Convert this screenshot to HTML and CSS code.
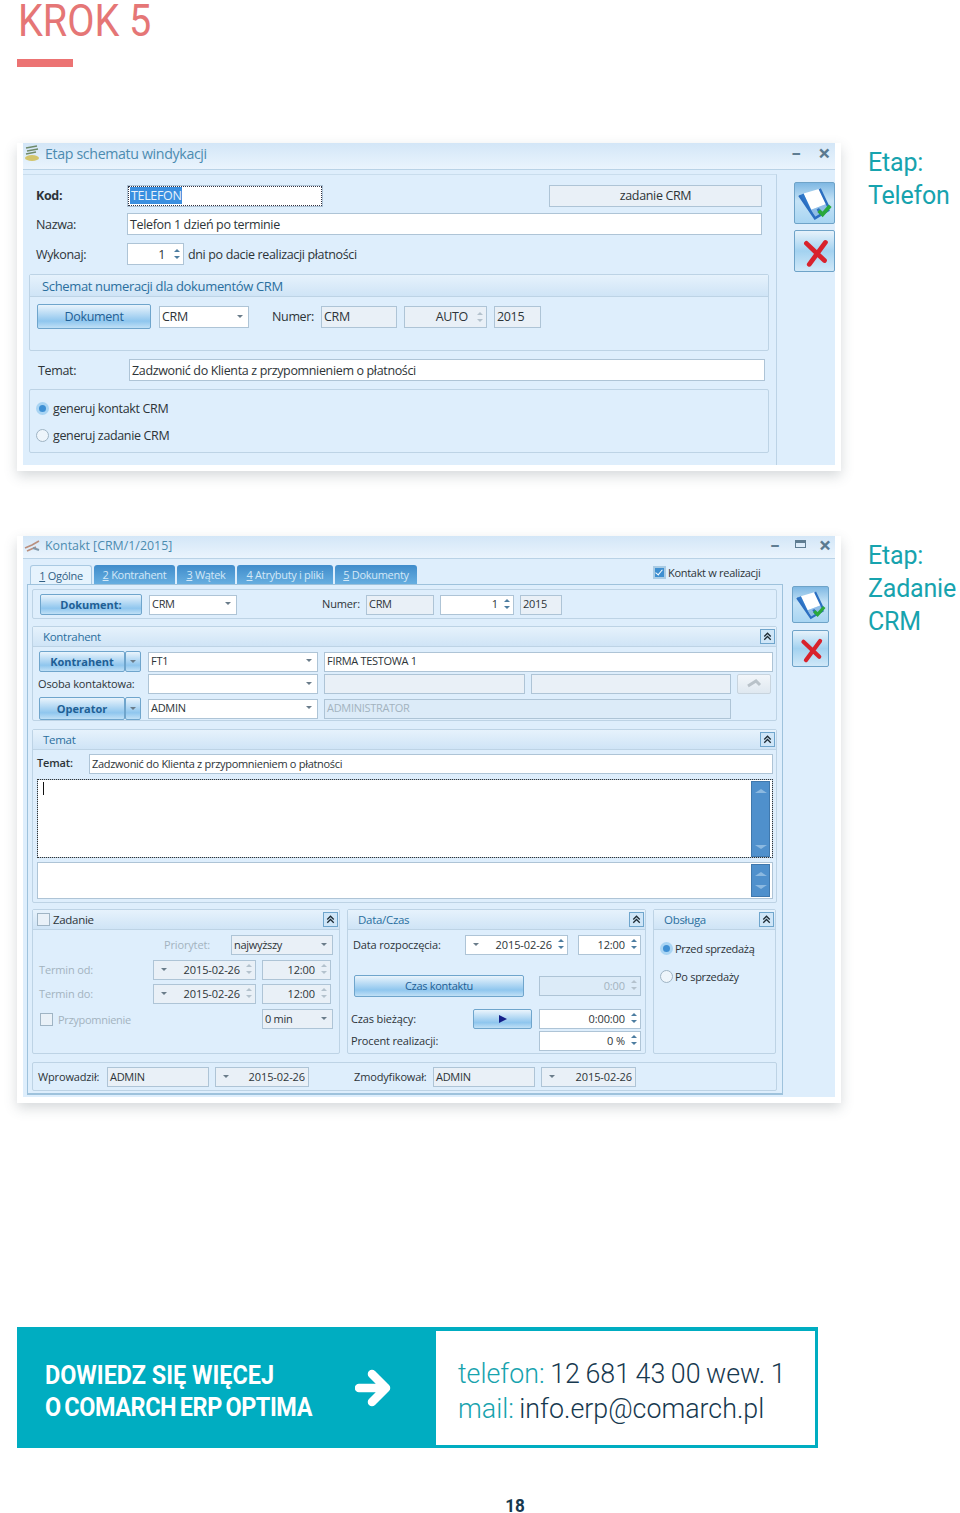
FILE: index.html
```html
<!DOCTYPE html>
<html lang="pl">
<head>
    <meta charset="UTF-8">
    <meta name="viewport" content="width=device-width, initial-scale=1.0">
    <link rel="stylesheet" href="styles.css">
    <title>Krok 5</title>
</head>
<body>

<svg class="defs" width="0" height="0">
    <symbol id="ico-save" viewBox="0 0 41 42">
        <polygon points="9,11 26,6 33,22 17,28" fill="#fff"/>
        <polygon points="17,28 33,22 36,28 21,37" fill="#8fbde6"/>
        <polygon points="4.500,13 9,11 17,28 21,37" fill="#2f78c9"/>
        <path d="M24 27 L28 34" stroke="#2c6fc1" stroke-width="3"/>
        <path d="M4.500 13 L21 37 L36 28 M26 6 L36 27" fill="none" stroke="#2c6fc1" stroke-width="2.600"/>
        <path d="M25 29 L29 33 L37 24" fill="none" stroke="#2aa83c" stroke-width="4"/>
    </symbol>
    <symbol id="ico-cancel" viewBox="0 0 41 42">
        <path d="M12 13 L31 31 M32 12 L15 35" fill="none" stroke="#d8222c" stroke-width="5" stroke-linecap="round"/>
    </symbol>
    <symbol id="ico-fold" viewBox="0 0 16 16">
        <path d="M4 8 L8 4 L12 8 M4 12 L8 8 L12 12" fill="none" stroke="#1d2a33" stroke-width="1.600"/>
    </symbol>
</svg>

<main class="page">
    <h1 class="step-title">KROK 5</h1>
    <div class="step-bar"></div>

    <!-- okno etapu -->
    <section class="shot-row shot-row-first">
        <div class="shot">
            <div class="win win-a">
                <div class="titlebar">
                    <svg class="win-ico" width="17" height="17" viewBox="0 0 17 17">
                        <path d="M2 3 L13 1 M3 6 L14 4 M2 9 L12 7" stroke="#6f8a6a" stroke-width="1.400"/>
                        <ellipse cx="8" cy="13" rx="7" ry="3" fill="#d3c56c"/>
                    </svg>
                    <span class="title-text">Etap schematu windykacji</span>
                    <span class="win-btn">–</span>
                    <span class="win-btn win-close">×</span>
                </div>
                <div class="win-body">
                    <div class="win-main">
                        <div class="grid a-kod">
                            <label class="lbl strong">Kod:</label>
                            <div class="fld focus"><span class="selected">TELEFON</span></div>
                            <span></span>
                            <div class="fld ro center">zadanie CRM</div>
                        </div>
                        <div class="grid a-nazwa">
                            <label class="lbl">Nazwa:</label>
                            <div class="fld">Telefon 1 dzień po terminie</div>
                        </div>
                        <div class="grid a-wykonaj">
                            <label class="lbl">Wykonaj:</label>
                            <div class="fld num">1<i class="spin"></i></div>
                            <span class="lbl">dni po dacie realizacji płatności</span>
                        </div>
                        <div class="group a-schemat">
                            <div class="group-head">Schemat numeracji dla dokumentów CRM</div>
                            <div class="grid a-numer">
                                <button class="btn plain">Dokument</button>
                                <div class="fld combo">CRM<i class="drop"></i></div>
                                <label class="lbl">Numer:</label>
                                <div class="fld ro">CRM</div>
                                <div class="fld ro num">AUTO<i class="spin"></i></div>
                                <div class="fld ro">2015</div>
                            </div>
                        </div>
                        <div class="grid a-temat">
                            <label class="lbl">Temat:</label>
                            <div class="fld">Zadzwonić do Klienta z przypomnieniem o płatności</div>
                        </div>
                        <div class="group a-radio">
                            <div class="choice"><i class="radio on"></i>generuj kontakt CRM</div>
                            <div class="choice"><i class="radio"></i>generuj zadanie CRM</div>
                        </div>
                    </div>
                    <div class="win-side">
                        <button class="act"><svg><use href="#ico-save"/></svg></button>
                        <button class="act act-x"><svg><use href="#ico-cancel"/></svg></button>
                    </div>
                </div>
            </div>
        </div>
        <p class="caption">Etap:<br>Telefon</p>
    </section>

    <!-- okno kontaktu -->
    <section class="shot-row shot-row-second">
        <div class="shot">
            <div class="win win-b">
                <div class="titlebar">
                    <svg class="win-ico" width="17" height="15" viewBox="0 0 17 15">
                        <path d="M1 10 L8 7 L15 3 M3 13 L12 9" stroke="#b98f7e" stroke-width="1.600" fill="none"/>
                        <path d="M9 10 L15 12" stroke="#7f97aa" stroke-width="2"/>
                    </svg>
                    <span class="title-text">Kontakt [CRM/1/2015]</span>
                    <span class="win-btn">–</span>
                    <span class="win-btn win-max"></span>
                    <span class="win-btn win-close">×</span>
                </div>
                <div class="tabs-line">
                    <span class="tab active"><u>1</u> Ogólne</span>
                    <span class="tab t-kon"><u>2</u> Kontrahent</span>
                    <span class="tab t-wat"><u>3</u> Wątek</span>
                    <span class="tab t-atr"><u>4</u> Atrybuty i pliki</span>
                    <span class="tab t-dok"><u>5</u> Dokumenty</span>
                    <span class="choice realizacja"><i class="check on"></i>Kontakt w realizacji</span>
                </div>
                <div class="win-body">
                    <div class="tab-panel">
                        <div class="group b-doc">
                            <div class="grid b-numer">
                                <button class="btn">Dokument:</button>
                                <div class="fld combo">CRM<i class="drop"></i></div>
                                <label class="lbl">Numer:</label>
                                <div class="fld ro">CRM</div>
                                <div class="fld num">1<i class="spin"></i></div>
                                <div class="fld ro">2015</div>
                            </div>
                        </div>

                        <div class="group b-kontrahent">
                            <div class="group-head">Kontrahent<i class="fold"><svg><use href="#ico-fold"/></svg></i></div>
                            <div class="grid b-k1">
                                <div class="split"><button class="btn">Kontrahent</button><button class="btn mini"><i class="drop"></i></button></div>
                                <div class="fld combo">FT1<i class="drop"></i></div>
                                <div class="fld">FIRMA TESTOWA 1</div>
                            </div>
                            <div class="grid b-k2">
                                <label class="lbl">Osoba kontaktowa:</label>
                                <div class="fld combo"><i class="drop"></i></div>
                                <div class="fld ro"></div>
                                <div class="fld ro"></div>
                                <button class="btn pale">
                                    <svg width="18" height="12" viewBox="0 0 18 12"><path d="M3 10 L11 5 L15 9" fill="none" stroke="#b9c2c9" stroke-width="3"/></svg>
                                </button>
                            </div>
                            <div class="grid b-k3">
                                <div class="split"><button class="btn">Operator</button><button class="btn mini"><i class="drop"></i></button></div>
                                <div class="fld combo">ADMIN<i class="drop"></i></div>
                                <div class="fld off">ADMINISTRATOR</div>
                            </div>
                        </div>

                        <div class="group b-tem">
                            <div class="group-head">Temat<i class="fold"><svg><use href="#ico-fold"/></svg></i></div>
                            <div class="grid b-t1">
                                <label class="lbl">Temat:</label>
                                <div class="fld">Zadzwonić do Klienta z przypomnieniem o płatności</div>
                            </div>
                            <div class="memo memo-big"><i class="caret"></i><i class="scroll"></i></div>
                            <div class="memo memo-small"><i class="scroll"></i></div>
                        </div>

                        <div class="bottom-row">
                            <div class="group zadanie">
                                <div class="group-head dark"><i class="check"></i>Zadanie<i class="fold"><svg><use href="#ico-fold"/></svg></i></div>
                                <div class="grid z-prio">
                                    <label class="lbl dim">Priorytet:</label>
                                    <div class="fld combo ro">najwyższy<i class="drop"></i></div>
                                </div>
                                <div class="grid z-term z-od">
                                    <label class="lbl dim">Termin od:</label>
                                    <div class="fld ro num date"><i class="drop"></i>2015-02-26<i class="spin"></i></div>
                                    <div class="fld ro num">12:00<i class="spin"></i></div>
                                </div>
                                <div class="grid z-term z-do">
                                    <label class="lbl dim">Termin do:</label>
                                    <div class="fld ro num date"><i class="drop"></i>2015-02-26<i class="spin"></i></div>
                                    <div class="fld ro num">12:00<i class="spin"></i></div>
                                </div>
                                <div class="grid z-przyp">
                                    <span class="choice dim"><i class="check"></i>Przypomnienie</span>
                                    <div class="fld combo ro">0 min<i class="drop"></i></div>
                                </div>
                            </div>

                            <div class="group datacz">
                                <div class="group-head">Data/Czas<i class="fold"><svg><use href="#ico-fold"/></svg></i></div>
                                <div class="grid d-start">
                                    <label class="lbl">Data rozpoczęcia:</label>
                                    <div class="fld num date"><i class="drop"></i>2015-02-26<i class="spin"></i></div>
                                    <div class="fld num">12:00<i class="spin"></i></div>
                                </div>
                                <div class="grid d-kontakt">
                                    <button class="btn plain">Czas kontaktu</button>
                                    <div class="fld off num">0:00<i class="spin"></i></div>
                                </div>
                                <div class="grid d-biez">
                                    <label class="lbl">Czas bieżący:</label>
                                    <button class="btn play"><i class="play-ico"></i></button>
                                    <div class="fld num">0:00:00<i class="spin"></i></div>
                                </div>
                                <div class="grid d-proc">
                                    <label class="lbl">Procent realizacji:</label>
                                    <div class="fld num">0 %<i class="spin"></i></div>
                                </div>
                            </div>

                            <div class="group obsluga">
                                <div class="group-head">Obsługa<i class="fold"><svg><use href="#ico-fold"/></svg></i></div>
                                <div class="choice"><i class="radio on"></i>Przed sprzedażą</div>
                                <div class="choice"><i class="radio"></i>Po sprzedaży</div>
                            </div>
                        </div>

                        <div class="group stopka">
                            <div class="grid s-row">
                                <label class="lbl">Wprowadził:</label>
                                <div class="fld ro">ADMIN</div>
                                <div class="fld ro num date"><i class="drop"></i>2015-02-26</div>
                                <label class="lbl">Zmodyfikował:</label>
                                <div class="fld ro">ADMIN</div>
                                <div class="fld ro num date"><i class="drop"></i>2015-02-26</div>
                            </div>
                        </div>
                    </div>
                    <div class="win-side">
                        <button class="act"><svg><use href="#ico-save"/></svg></button>
                        <button class="act act-x"><svg><use href="#ico-cancel"/></svg></button>
                    </div>
                </div>
            </div>
        </div>
        <p class="caption">Etap:<br>Zadanie<br>CRM</p>
    </section>

    <section class="banner">
        <h2 class="banner-title">DOWIEDZ SIĘ WIĘCEJ<br><span class="tight">O COMARCH ERP OPTIMA</span></h2>
        <svg class="banner-arrow" width="36" height="38" viewBox="0 0 36 38">
            <path d="M4 19 H28 M17 5 L31 19 L17 33" fill="none" stroke="#fff" stroke-width="8.500" stroke-linecap="round" stroke-linejoin="round"/>
        </svg>
        <div class="banner-box">
            <p><span class="key">telefon:</span> 12 681 43 00 wew. 1</p>
            <p><span class="key">mail:</span> info.erp@comarch.pl</p>
        </div>
    </section>

    <div class="page-no">18</div>
</main>

</body>
</html>
```

FILE: styles.css
```css
body {
    margin: 0;
    background-color: #fff;
    font-family: Roboto, "Open Sans", sans-serif;
}

.defs {
    display: block;
    height: 0;
}

.page {
    width: 960px;
    height: 1513px;
    padding-left: 17px;
    box-sizing: border-box;
}

.step-title {
    margin: 0;
    height: 59px;
    padding-left: 1px;
    font-size: 44px;
    line-height: 42px;
    font-weight: 400;
    color: #e57676;
    transform: scaleX(0.9);
    transform-origin: left;
}

.step-bar {
    width: 56px;
    height: 8px;
    background-color: #ec7373;
}

/* screenshot with caption */
.shot-row {
    display: flex;
    align-items: flex-start;
}

.shot-row-first {
    margin-top: 76px;
}

.shot-row-second {
    margin-top: 65px;
}

.shot {
    flex-shrink: 0;
    width: 824px;
    padding: 0 6px 6px;
    box-sizing: border-box;
    background-color: #fff;
    box-shadow: 0 5px 12px rgba(70, 80, 90, 0.22);
}

.caption {
    margin: 3px 0 0 27px;
    font-size: 25px;
    line-height: 33px;
    font-weight: 400;
    letter-spacing: -0.2px;
    white-space: nowrap;
    color: #17a3ae;
}

/* window chrome */
.win {
    display: flex;
    flex-direction: column;
    background-color: #deeefc;
    font-family: "Open Sans", sans-serif;
    color: #2d3438;
}

.win-a {
    height: 322px;
    font-size: 12.5px;
    letter-spacing: -0.35px;
}

.win-b {
    height: 561px;
    font-size: 11px;
    letter-spacing: -0.3px;
}

.titlebar {
    display: flex;
    align-items: center;
    flex-shrink: 0;
    box-sizing: border-box;
    border-bottom: 1px solid #b9d2e6;
    background: linear-gradient(#d3e6f7, #eaf4fd);
    color: #4c8bb0;
}

.win-a .titlebar {
    height: 27px;
    padding-bottom: 6px;
    font-size: 14.2px;
}

.win-b .titlebar {
    height: 23px;
    padding-bottom: 3px;
    font-size: 12.4px;
    letter-spacing: 0;
}

.win-ico {
    margin: 0 4px 0 1px;
}

.title-text {
    flex: 1;
}

.win-btn {
    display: flex;
    align-items: center;
    justify-content: center;
    width: 20px;
    height: 18px;
    margin: 0 0 4px 5px;
    font-size: 18px;
    line-height: 18px;
    font-weight: 700;
    color: #5f7d92;
}

.win-a .win-btn {
    width: 22px;
    margin: 0 0 3px 6px;
}

.win-close {
    color: #5b7a90;
    font-size: 22px;
}

.win-max::before {
    content: "";
    width: 11px;
    height: 8px;
    box-sizing: border-box;
    border: 1px solid #5f7d92;
    border-top-width: 3px;
}

.win-body {
    display: flex;
    flex: 1;
    min-height: 0;
}

.win-main {
    width: 754px;
    margin-top: 4px;
    padding-top: 10px;
    box-sizing: border-box;
    border-top: 1px solid #c9dded;
    border-right: 1px solid #bcd3e6;
}

.win-side {
    display: flex;
    flex-direction: column;
    flex: 1;
    gap: 6px;
    padding: 12px 0 0 17px;
}

.win-b .win-side {
    gap: 7px;
    padding: 2px 0 0 9px;
}

.act {
    width: 41px;
    height: 42px;
    padding: 0;
    border: 1px solid #6ea3c8;
    border-radius: 2px;
    background: linear-gradient(#7fb8e3, #c5e3f6 45%, #a8d5f2);
}

.act-x {
    background: linear-gradient(#e6f2fb, #a3d2f0 50%, #d0e8f8);
}

.win-b .act {
    width: 37px;
    height: 37px;
}

.act svg {
    display: block;
    width: 100%;
    height: 100%;
}

/* form parts */
.grid {
    display: grid;
    align-items: center;
}

.lbl {
    white-space: nowrap;
}

.win-b .lbl {
    padding-bottom: 2px;
    letter-spacing: -0.15px;
}

.strong {
    font-weight: 700;
}

.dim {
    color: #a3b3bf;
}

.fld {
    display: flex;
    align-items: center;
    height: 22px;
    padding: 0 2px;
    box-sizing: border-box;
    border: 1px solid #aec4d6;
    background-color: #fff;
    color: #2d3438;
    white-space: nowrap;
    overflow: hidden;
}

.win-b .fld {
    height: 20px;
    padding-bottom: 2px;
}

.fld.ro {
    background-color: #e9f0f7;
}

.fld.off {
    background-color: #dcebf8;
    color: #a3b3bf;
}

.fld.center {
    justify-content: center;
}

.fld.num {
    justify-content: flex-end;
    padding-right: 3px;
}

.win-b .fld.num {
    letter-spacing: -0.1px;
}

.fld.combo {
    justify-content: space-between;
    padding-right: 5px;
}

.fld.combo .drop {
    margin-left: auto;
}

.fld.date {
    justify-content: flex-end;
    gap: 0;
}

.fld.date .drop {
    margin-right: auto;
    margin-left: 5px;
}

.focus {
    outline: 1px dotted #334;
    outline-offset: -2px;
}

.selected {
    padding: 0 1px;
    background-color: #3a8fe0;
    color: #e8f2fb;
}

.drop {
    width: 0;
    height: 0;
    border-left: 3px solid transparent;
    border-right: 3px solid transparent;
    border-top: 3px solid #6a7c8a;
}

.spin {
    display: flex;
    flex-direction: column;
    justify-content: center;
    gap: 4px;
    margin-left: 6px;
}

.win-a .spin {
    margin-left: 9px;
}

.spin::before,
.spin::after {
    content: "";
    width: 0;
    height: 0;
    border-left: 3px solid transparent;
    border-right: 3px solid transparent;
}

.spin::before {
    border-bottom: 3px solid #4d7da0;
}

.spin::after {
    border-top: 3px solid #4d7da0;
}

.ro .spin::before,
.off .spin::before {
    border-bottom-color: #b4c2cd;
}

.ro .spin::after,
.off .spin::after {
    border-top-color: #b4c2cd;
}

.btn {
    height: 100%;
    padding: 0 0 1px;
    border: 1px solid #6fa5cc;
    border-radius: 2px;
    background: linear-gradient(#eaf4fc, #8fc6ee 70%, #c0e0f6);
    color: #1e5f95;
    font-family: inherit;
    font-size: inherit;
    letter-spacing: 0;
    font-weight: 700;
}

.btn.plain {
    font-weight: 400;
    letter-spacing: -0.3px;
}

.btn.pale {
    height: 20px;
    border-color: #c8d4de;
    background: linear-gradient(#f2f6fa, #dfe8f0);
}

.split {
    display: grid;
    grid-template-columns: 86px 16px;
    width: 102px;
    height: 100%;
}

.btn.mini {
    display: flex;
    align-items: center;
    justify-content: center;
}

.choice {
    display: flex;
    align-items: center;
    gap: 4px;
    white-space: nowrap;
}

.win-b .choice {
    gap: 2px;
}

.radio {
    width: 13px;
    height: 13px;
    box-sizing: border-box;
    border: 1px solid #9fb4c4;
    border-radius: 50%;
    background-color: #eef5fb;
}

.radio.on {
    border: 3px solid #a9d4f3;
    background-color: #3f90d4;
}

.check {
    position: relative;
    width: 13px;
    height: 13px;
    box-sizing: border-box;
    border: 1px solid #9fb4c4;
    background-color: #e9f1f8;
}

.check.on {
    border: 2px solid #a9cbe4;
    background-color: #3f8fd0;
}

/* the tick sits over the box */
.check.on::after {
    content: "";
    position: absolute;
    left: 2px;
    top: 0;
    width: 3px;
    height: 6px;
    border-right: 1.500px solid #fff;
    border-bottom: 1.500px solid #fff;
    transform: rotate(40deg);
}

.group {
    box-sizing: border-box;
    border: 1px solid #bdd3e5;
    border-radius: 2px;
    background-color: #deeefc;
}

.group-head {
    display: flex;
    align-items: center;
    justify-content: space-between;
    box-sizing: border-box;
    border-bottom: 1px solid #bdd3e5;
    background: linear-gradient(#e6f2fc, #cfe4f6);
    color: #2a6f9e;
}

.group-head.dark {
    justify-content: flex-start;
    gap: 3px;
    color: #2d3438;
}

.group-head.dark .fold {
    margin-left: auto;
}

.fold {
    display: flex;
    width: 15px;
    height: 15px;
    box-sizing: border-box;
    margin: 0 1px 0 0;
    border: 1px solid #6fa5cc;
    background-color: #cfe6f8;
}

.fold svg {
    width: 100%;
    height: 100%;
}

/* first window */
.a-kod {
    grid-template-columns: 91px 196px 226px 213px;
    margin-left: 13px;
}

.a-kod > .lbl,
.a-kod > .fld {
    padding-bottom: 2px;
}

.a-nazwa {
    grid-template-columns: 91px 635px;
    margin: 6px 0 0 13px;
}

.a-wykonaj {
    grid-template-columns: 91px 57px auto;
    margin: 8px 0 0 13px;
}

.a-wykonaj .lbl:last-child {
    padding-left: 4px;
}

.a-schemat {
    width: 740px;
    height: 77px;
    margin: 9px 0 0 6px;
}

.a-schemat .group-head {
    height: 22px;
    padding-left: 12px;
    font-size: 13px;
}

.a-numer {
    grid-template-columns: 114px 98px 72px 76px 90px 54px;
    height: 25px;
    margin: 7px 0 0 7px;
}

.a-numer .fld:nth-child(2) {
    margin-left: 8px;
}

.a-numer .lbl {
    padding-left: 23px;
}

.a-numer .fld:nth-child(5),
.a-numer .fld:nth-child(6) {
    margin-left: 7px;
}

.a-temat {
    grid-template-columns: 91px 636px;
    margin: 8px 0 0 15px;
}

.a-radio {
    display: flex;
    flex-direction: column;
    gap: 10px;
    width: 740px;
    height: 64px;
    margin: 8px 0 0 6px;
    padding: 10px 0 0 6px;
}

.a-radio .choice {
    height: 17px;
}

/* second window */
.tabs-line {
    display: flex;
    align-items: flex-end;
    flex-shrink: 0;
    gap: 2px;
    height: 25px;
    padding-left: 7px;
}

.tab {
    display: flex;
    align-items: center;
    justify-content: center;
    box-sizing: border-box;
    height: 19px;
    border-radius: 3px 3px 0 0;
    background: linear-gradient(#3f8ccb, #67aee0);
    color: #d3e8f7;
    font-size: 11px;
    white-space: pre;
}

.tab.active {
    width: 62px;
    border: 1px solid #a9c9e2;
    border-bottom: 0;
    background-color: #e6f3fd;
    background-image: none;
    color: #2f5f85;
}

.t-kon { width: 81px; }
.t-wat { width: 58px; }
.t-atr { width: 96px; }
.t-dok { width: 82px; }

.realizacja {
    align-self: center;
    margin: 2px 0 0 234px;
}

.tab-panel {
    display: flex;
    flex-direction: column;
    width: 756px;
    height: 511px;
    margin-left: 4px;
    padding: 4px 5px 0 4px;
    box-sizing: border-box;
    border: 1px solid #9ec2dc;
    border-bottom-width: 2px;
    background-color: #deeefc;
}

.b-doc {
    flex-shrink: 0;
    height: 30px;
    padding: 4px 0 0 7px;
}

.b-numer {
    grid-template-columns: 102px 95px 129px 68px 80px 48px;
    height: 21px;
}

.b-numer .fld:nth-child(2) {
    margin-left: 7px;
}

.b-numer .lbl {
    padding-left: 85px;
}

.b-numer .fld:nth-child(5),
.b-numer .fld:nth-child(6) {
    margin-left: 6px;
}

.b-kontrahent {
    flex-shrink: 0;
    height: 95px;
    margin-top: 7px;
}

.b-kontrahent .group-head,
.b-tem .group-head,
.bottom-row .group-head {
    height: 20px;
    padding-left: 10px;
    font-size: 11.5px;
}

.b-k1,
.b-k3 {
    column-gap: 6px;
    margin: 4px 0 0 6px;
}

.b-k1 {
    grid-template-columns: 103px 170px 449px;
    height: 21px;
}

.b-k3 {
    grid-template-columns: 103px 170px 407px;
    height: 23px;
    margin-top: 3px;
}

.b-k2 {
    grid-template-columns: 104px 170px 201px 200px 34px;
    column-gap: 6px;
    margin: 2px 0 0 5px;
}

.b-tem {
    flex-shrink: 0;
    height: 174px;
    margin-top: 8px;
}

.b-t1 {
    grid-template-columns: 52px 684px;
    margin: 4px 0 0 4px;
}

.b-t1 .lbl {
    padding-bottom: 4px;
    font-weight: 600;
}

.memo {
    display: flex;
    justify-content: space-between;
    box-sizing: border-box;
    width: 736px;
    margin-left: 4px;
    padding-right: 2px;
    background-color: #fff;
    border: 1px solid #aec4d6;
}

.memo-big {
    height: 79px;
    margin-top: 5px;
    padding: 0 2px 0 5px;
    outline: 1px dotted #333;
    outline-offset: -1px;
}

.memo-small {
    height: 37px;
    margin-top: 4px;
    padding-top: 1px;
    justify-content: flex-end;
}

.caret {
    width: 1px;
    height: 13px;
    margin-top: 2px;
    background-color: #111;
}

/* scrollbar track with its two arrows */
.scroll {
    display: flex;
    flex-direction: column;
    justify-content: space-between;
    align-items: center;
    width: 19px;
    height: calc(100% - 1px);
    padding: 7px 0;
    margin-top: 1px;
    background-color: #4f90cc;
    border: 1px solid #3f78ad;
    box-sizing: border-box;
}

.memo-small .scroll {
    height: 33px;
    margin: 0;
}

.scroll::before,
.scroll::after {
    content: "";
    width: 0;
    height: 0;
    border-left: 6px solid transparent;
    border-right: 6px solid transparent;
}

.scroll::before {
    border-bottom: 4px solid #8cb9e0;
}

.scroll::after {
    border-top: 4px solid #8cb9e0;
}

.bottom-row {
    display: grid;
    flex-shrink: 0;
    grid-template-columns: 308px 299px 123px;
    column-gap: 7px;
    height: 145px;
    margin-top: 6px;
}

.zadanie > .group-head {
    padding-left: 4px;
}

.z-prio {
    grid-template-columns: 67px 102px;
    margin: 5px 0 0 131px;
}

.z-term {
    grid-template-columns: 114px 103px 75px;
    margin-left: 6px;
}

.z-term .fld:last-child {
    margin-left: 6px;
}

.z-od {
    margin-top: 5px;
}

.z-do {
    margin-top: 4px;
}

.z-przyp {
    grid-template-columns: 222px 71px;
    margin: 5px 0 0 7px;
}

.z-przyp .choice {
    gap: 5px;
}

.d-start {
    grid-template-columns: 112px 103px 73px;
    margin: 5px 0 0 5px;
}

.d-start .fld:last-child {
    margin-left: 10px;
}

.d-kontakt {
    grid-template-columns: 185px 102px;
    height: 22px;
    margin: 20px 0 0 6px;
}

.d-kontakt .btn {
    width: 170px;
}

.d-biez {
    grid-template-columns: 122px 66px 102px;
    height: 20px;
    margin: 12px 0 0 3px;
}

.d-biez .btn {
    width: 59px;
}

.play-ico {
    display: inline-block;
    width: 0;
    height: 0;
    border-top: 4px solid transparent;
    border-bottom: 4px solid transparent;
    border-left: 8px solid #14208a;
}

.d-proc {
    grid-template-columns: 188px 102px;
    margin: 2px 0 0 3px;
}

.obsluga .choice {
    height: 16px;
    margin-left: 6px;
}

.obsluga .group-head + .choice {
    margin-top: 10px;
}

.obsluga .choice + .choice {
    margin-top: 12px;
}

.stopka {
    flex-shrink: 0;
    height: 29px;
    margin-top: 8px;
    padding: 4px 0 0 5px;
}

.s-row {
    grid-template-columns: 69px 102px 100px 124px 102px 101px;
}

.s-row .fld:nth-child(3),
.s-row .fld:nth-child(6) {
    margin-left: 6px;
}

.s-row .lbl:nth-child(4) {
    padding-left: 45px;
}

/* contact banner */
.banner {
    display: flex;
    align-items: center;
    box-sizing: border-box;
    width: 801px;
    height: 121px;
    margin-top: 224px;
    padding: 4px 3px 3px 28px;
    background-color: #00adc1;
}

.banner-title {
    flex-shrink: 0;
    width: 310px;
    margin: 6px 0 0;
    color: #fff;
    font-size: 26px;
    line-height: 32px;
    font-weight: 700;
    white-space: nowrap;
    transform: scaleX(0.9);
    transform-origin: left;
}

.tight {
    letter-spacing: -0.45px;
    word-spacing: -2px;
}

.banner-box {
    display: flex;
    flex-direction: column;
    justify-content: center;
    gap: 2px;
    align-self: stretch;
    width: 379px;
    margin-left: 45px;
    padding: 7px 0 0 22px;
    box-sizing: border-box;
    background-color: #fff;
    color: #17394f;
    font-size: 26.800px;
    font-weight: 300;
}

.banner-box p {
    margin: 0;
    line-height: 33px;
    word-spacing: -1px;
    white-space: nowrap;
}

.key {
    color: #17a3ae;
}

.page-no {
    width: 36px;
    margin: 50px 0 0 480px;
    text-align: center;
    color: #17394f;
    font-size: 19px;
    line-height: 16px;
    font-weight: 700;
    transform: scaleX(0.9);
}
```
